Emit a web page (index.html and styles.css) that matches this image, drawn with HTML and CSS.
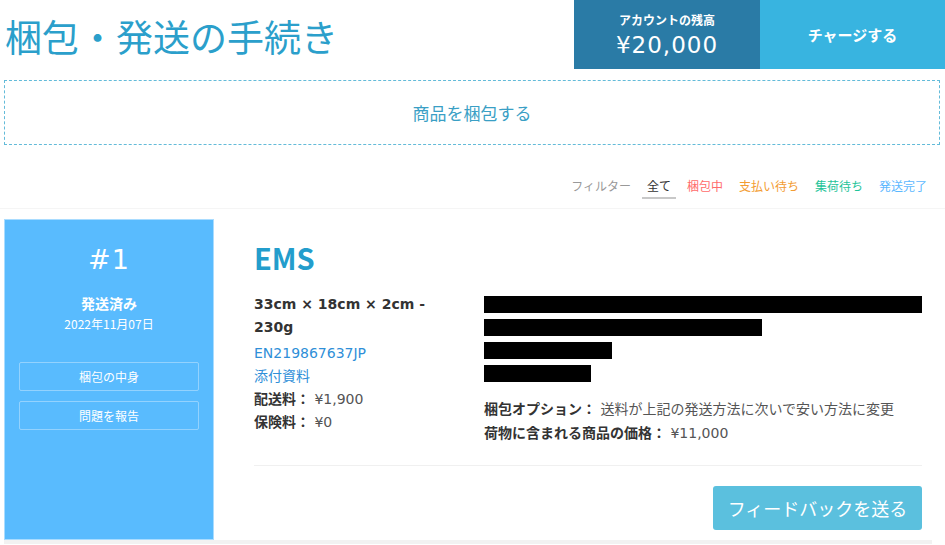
FILE: index.html
```html
<!DOCTYPE html>
<html lang="ja">
<head>
<meta charset="utf-8">
<title>梱包・発送の手続き</title>
<link rel="stylesheet" href="styles.css">
</head>
<body>
<header class="header">
  <h1 class="title">梱包・発送の手続き</h1>
  <div class="header-actions">
    <div class="balance">
      <div class="balance-label">アカウントの残高</div>
      <div class="balance-amount">¥20,000</div>
    </div>
    <a class="charge">チャージする</a>
  </div>
</header>

<div class="pack-box">商品を梱包する</div>

<nav class="filters">
  <span class="filter-label">フィルター</span>
  <span class="filter-item is-active">全て</span>
  <span class="filter-item f-red">梱包中</span>
  <span class="filter-item f-orange">支払い待ち</span>
  <span class="filter-item f-green">集荷待ち</span>
  <span class="filter-item f-blue">発送完了</span>
</nav>

<section class="list">
  <article class="card">
    <aside class="side">
      <div class="side-num">#1</div>
      <div class="side-status">発送済み</div>
      <div class="side-date">2022年11月07日</div>
      <a class="side-btn">梱包の中身</a>
      <a class="side-btn">問題を報告</a>
    </aside>
    <div class="content">
      <h2 class="method">EMS</h2>
      <div class="details">
        <div class="col-left">
          <div class="dim">33cm × 18cm × 2cm - 230g</div>
          <a class="link">EN219867637JP</a>
          <a class="link">添付資料</a>
          <div class="kv"><b>配送料：</b> ¥1,900</div>
          <div class="kv"><b>保険料：</b> ¥0</div>
        </div>
        <div class="col-right">
          <div class="redact" style="width:438px"></div>
          <div class="redact" style="width:278px"></div>
          <div class="redact" style="width:128px"></div>
          <div class="redact" style="width:107px"></div>
          <div class="opts">
            <div class="opt"><b>梱包オプション：</b> 送料が上記の発送方法に次いで安い方法に変更</div>
            <div class="opt"><b>荷物に含まれる商品の価格：</b> ¥11,000</div>
          </div>
        </div>
      </div>
      <div class="actions">
        <a class="feedback">フィードバックを送る</a>
      </div>
    </div>
  </article>
</section>
</body>
</html>
```

FILE: styles.css
```css
* { box-sizing: border-box; }
html, body { margin: 0; padding: 0; background: #fff; }
body {
  font-family: "DejaVu Sans", "Noto Sans CJK JP", sans-serif;
  color: #333;
  width: 945px;
  height: 545px;
  overflow: hidden;
}
a { cursor: pointer; }

.header {
  display: flex;
  justify-content: space-between;
  align-items: stretch;
  height: 69px;
}
.title {
  margin: 0;
  padding-left: 5px;
  font-family: "Noto Sans CJK JP", sans-serif;
  font-weight: 400;
  font-size: 37px;
  line-height: 72px;
  color: #2b9fcb;
  white-space: nowrap;
}
.header-actions { display: flex; }
.balance {
  width: 186px;
  background: #2a7ba6;
  color: #fff;
  display: flex;
  flex-direction: column;
  align-items: center;
  padding-top: 12px;
}
.balance-label {
  font-family: "Noto Sans CJK JP", sans-serif;
  font-weight: 700;
  font-size: 12px;
  line-height: 16px;
}
.balance-amount {
  font-size: 23px;
  letter-spacing: 1px;
  line-height: 34px;
}
.charge {
  width: 185px;
  background: #38b4e0;
  color: #fff;
  display: flex;
  align-items: center;
  justify-content: center;
  font-family: "Noto Sans CJK JP", sans-serif;
  font-weight: 700;
  font-size: 15px;
}

.pack-box {
  margin: 11px 5px 0 4px;
  height: 65px;
  border: 1px dashed #63bbd9;
  display: flex;
  align-items: center;
  justify-content: center;
  font-family: "Noto Sans CJK JP", sans-serif;
  font-size: 17px;
  color: #3a9fc5;
}

.filters {
  display: flex;
  justify-content: flex-end;
  align-items: flex-start;
  gap: 6px;
  margin: 30px 13px 0 0;
  font-family: "Noto Sans CJK JP", sans-serif;
  font-size: 12px;
  line-height: 16px;
}
.filter-label { color: #999; padding-top: 3px; margin-right: 5px; }
.filter-item {
  padding: 3px 5px;
  border-bottom: 2px solid transparent;
}
.filter-item.is-active { color: #333; border-bottom-color: #c8c8c8; }
.f-red { color: #ff6b6b; }
.f-orange { color: #f39c32; }
.f-green { color: #1fc49a; }
.f-blue { color: #5cb8ff; }

.list {
  margin-top: 9px;
  border-top: 1px solid #f5f5f5;
  padding: 10px 13px 0 4px;
}
.card {
  display: flex;
  height: 325px;
  border-bottom: 4px solid #f2f2f2;
}
.side {
  width: 210px;
  height: 321px;
  flex: none;
  background: #59bbfe;
  border: 1px solid #a9dcff;
  color: #fff;
  display: flex;
  flex-direction: column;
  align-items: stretch;
  padding: 23px 14px 0;
  text-align: center;
  font-family: "Noto Sans CJK JP", sans-serif;
}
.side-num {
  font-family: "DejaVu Sans", sans-serif;
  font-size: 27px;
  line-height: 34px;
  letter-spacing: 1px;
}
.side-status {
  margin-top: 16px;
  font-weight: 700;
  font-size: 14px;
  line-height: 20px;
}
.side-date {
  margin-top: 2px;
  font-size: 12px;
  line-height: 18px;
}
.side-btn {
  display: block;
  height: 29px;
  line-height: 27px;
  border: 1px solid rgba(255,255,255,0.35);
  border-radius: 2px;
  font-size: 12px;
  margin-top: 10px;
}
.side-date + .side-btn { margin-top: 29px; }

.content {
  flex: 1;
  padding: 20px 10px 0 40px;
  display: flex;
  flex-direction: column;
}
.method {
  margin: 0;
  font-family: "Noto Sans CJK JP", sans-serif;
  font-weight: 700;
  font-size: 29px;
  line-height: 36px;
  color: #239dcc;
}
.details {
  display: flex;
  gap: 30px;
  margin-top: 18px;
  padding-bottom: 20px;
  border-bottom: 1px solid #f0f0f0;
}
.col-left {
  width: 200px;
  flex: none;
  font-size: 14px;
  line-height: 23px;
}
.dim { font-weight: 700; color: #333; width: 185px; margin-bottom: 3px; }
.link { display: block; color: #2f8fd8; }
.kv { color: #555; }
.kv b { color: #333; }
.col-right {
  flex: 1;
  padding-top: 3px;
}
.redact {
  height: 17px;
  background: #000;
  margin-bottom: 6px;
}
.opts {
  margin-top: 15px;
  font-size: 14px;
  line-height: 24px;
  color: #555;
}
.opt b { color: #333; }
.actions {
  display: flex;
  justify-content: flex-end;
  padding-top: 20px;
}
.feedback {
  display: block;
  width: 209px;
  height: 44px;
  line-height: 44px;
  text-align: center;
  background: #5bc0de;
  color: #fff;
  border-radius: 3px;
  font-family: "Noto Sans CJK JP", sans-serif;
  font-size: 18px;
}
```
